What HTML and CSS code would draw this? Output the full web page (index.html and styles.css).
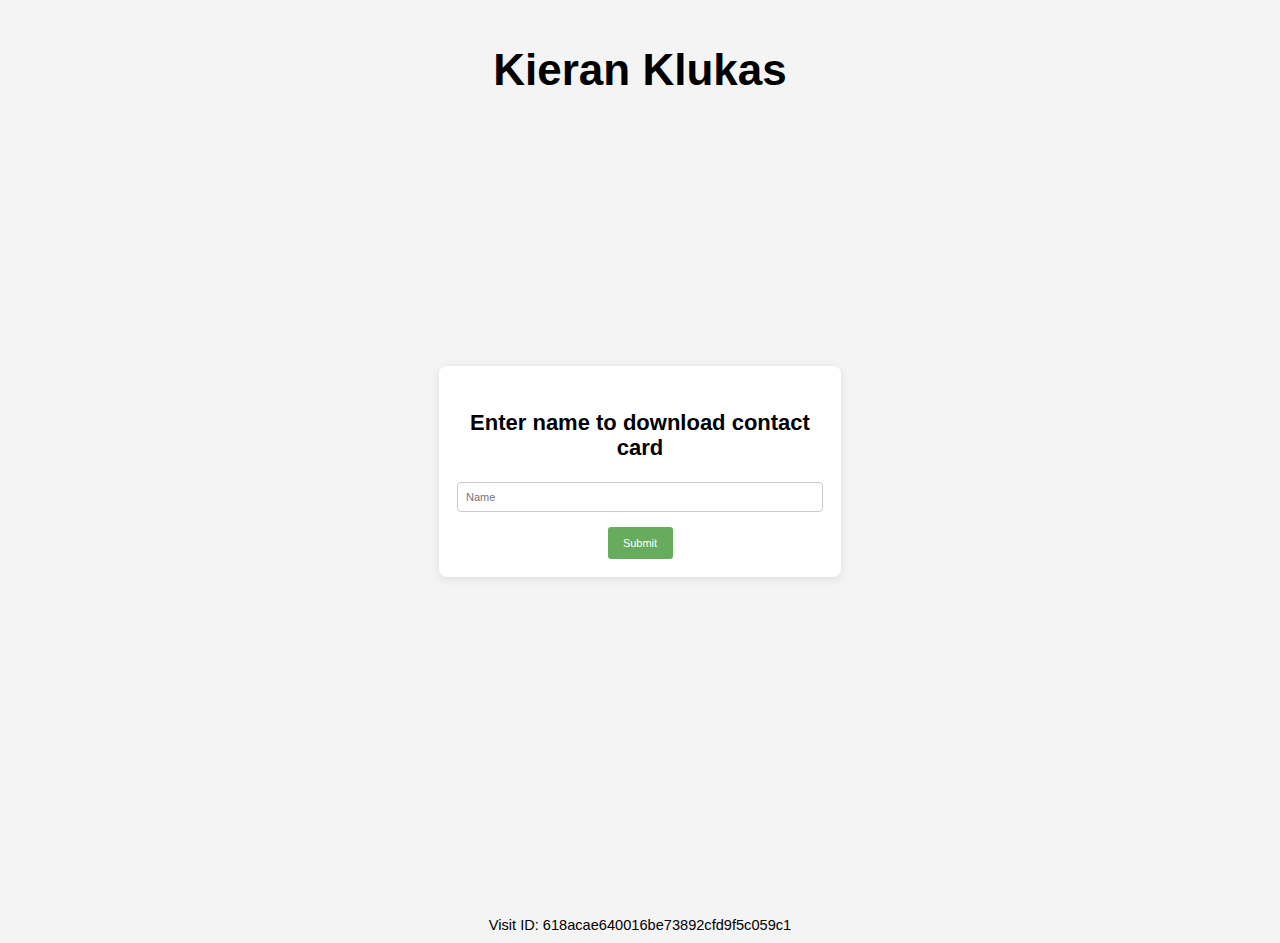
FILE: index.html
```html
<!DOCTYPE html>
<html lang="en">
<head>
<meta charset="utf-8">
<title>Kieran Klukas</title>
<link rel="stylesheet" href="styles.css">
</head>
<body>
<header class="site-header">
  <h1 class="site-title">Kieran Klukas</h1>
</header>
<main class="main">
  <form class="card">
    <h2 class="card-title">Enter name to download contact card</h2>
    <input class="name-input" type="text" placeholder="Name">
    <button class="submit-btn" type="button">Submit</button>
  </form>
</main>
<footer class="site-footer">Visit ID: 618acae640016be73892cfd9f5c059c1</footer>
</body>
</html>
```
FILE: styles.css
```css
html, body {
  margin: 0;
  padding: 0;
}
body {
  background: #f4f4f4;
  font-family: "Liberation Sans", Arial, sans-serif;
  color: #000;
  height: 100vh;
  display: flex;
  flex-direction: column;
}
.site-header {
  text-align: center;
}
.site-title {
  margin: 44px 0 0;
  font-size: 44px;
  line-height: 51px;
  font-weight: bold;
}
.main {
  flex: 1;
  display: flex;
  align-items: center;
  justify-content: center;
  padding-bottom: 62px;
}
.card {
  width: 366px;
  padding: 18px;
  background: #fff;
  border-radius: 8px;
  box-shadow: 0 2px 10px rgba(0, 0, 0, 0.1);
  display: flex;
  flex-direction: column;
  align-items: center;
}
.card-title {
  margin: 26px 0 22px;
  font-size: 22px;
  line-height: 25px;
  text-align: center;
  font-weight: bold;
}
.name-input {
  box-sizing: border-box;
  width: 100%;
  height: 30px;
  padding: 0 8px;
  border: 1px solid #cccccc;
  border-radius: 4px;
  font-family: "Liberation Sans", Arial, sans-serif;
  font-size: 11px;
  background: #fff;
  margin: 0 0 15px;
}
.name-input::placeholder {
  color: #757575;
}
.submit-btn {
  width: 65px;
  height: 32px;
  border: none;
  border-radius: 3px;
  background: #67ab5e;
  color: #fff;
  font-family: "Liberation Sans", Arial, sans-serif;
  font-size: 11px;
  padding: 0;
  cursor: pointer;
}
.site-footer {
  text-align: center;
  font-size: 14.6px;
  line-height: 17px;
  padding: 8px 0 9px;
}
```
